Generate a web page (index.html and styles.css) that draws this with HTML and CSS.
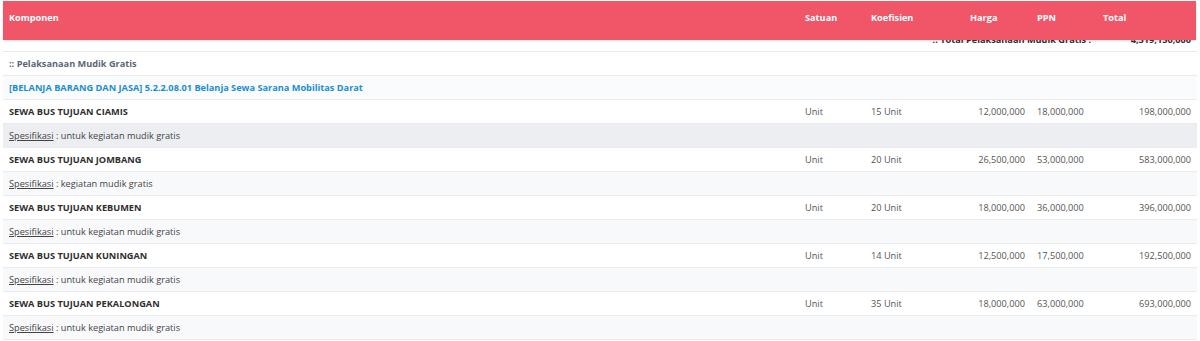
FILE: index.html
```html
<!DOCTYPE html>
<html lang="id">
<head>
<meta charset="utf-8">
<title>Komponen</title>
<link rel="stylesheet" href="styles.css">
</head>
<body>
<div class="frame">
  <div class="head">
    <div class="hc">Komponen</div>
    <div class="hc">Satuan</div>
    <div class="hc">Koefisien</div>
    <div class="hc">Harga</div>
    <div class="hc">PPN</div>
    <div class="hc">Total</div>
  </div>
  <table class="grid">
    <colgroup>
      <col class="c-komp"><col class="c-sat"><col class="c-koef"><col class="c-harga"><col class="c-ppn"><col class="c-total">
    </colgroup>
    <tbody>
      <tr class="total-row">
        <td colspan="5" class="r">:: Total Pelaksanaan Mudik Gratis :</td>
        <td class="r">4,319,150,000</td>
      </tr>
      <tr class="group">
        <td colspan="6">:: Pelaksanaan Mudik Gratis</td>
      </tr>
      <tr class="akun">
        <td colspan="6">[BELANJA BARANG DAN JASA] 5.2.2.08.01 Belanja Sewa Sarana Mobilitas Darat</td>
      </tr>
      <tr class="item">
        <td class="name">SEWA BUS TUJUAN CIAMIS</td>
        <td>Unit</td><td>15 Unit</td><td class="r">12,000,000</td><td>18,000,000</td><td class="r">198,000,000</td>
      </tr>
      <tr class="spec hover"><td colspan="6"><u>Spesifikasi</u> : untuk kegiatan mudik gratis</td></tr>
      <tr class="item">
        <td class="name">SEWA BUS TUJUAN JOMBANG</td>
        <td>Unit</td><td>20 Unit</td><td class="r">26,500,000</td><td>53,000,000</td><td class="r">583,000,000</td>
      </tr>
      <tr class="spec"><td colspan="6"><u>Spesifikasi</u> : kegiatan mudik gratis</td></tr>
      <tr class="item">
        <td class="name">SEWA BUS TUJUAN KEBUMEN</td>
        <td>Unit</td><td>20 Unit</td><td class="r">18,000,000</td><td>36,000,000</td><td class="r">396,000,000</td>
      </tr>
      <tr class="spec"><td colspan="6"><u>Spesifikasi</u> : untuk kegiatan mudik gratis</td></tr>
      <tr class="item">
        <td class="name">SEWA BUS TUJUAN KUNINGAN</td>
        <td>Unit</td><td>14 Unit</td><td class="r">12,500,000</td><td>17,500,000</td><td class="r">192,500,000</td>
      </tr>
      <tr class="spec"><td colspan="6"><u>Spesifikasi</u> : untuk kegiatan mudik gratis</td></tr>
      <tr class="item">
        <td class="name">SEWA BUS TUJUAN PEKALONGAN</td>
        <td>Unit</td><td>35 Unit</td><td class="r">18,000,000</td><td>63,000,000</td><td class="r">693,000,000</td>
      </tr>
      <tr class="spec"><td colspan="6"><u>Spesifikasi</u> : untuk kegiatan mudik gratis</td></tr>
    </tbody>
  </table>
</div>
</body>
</html>
```
FILE: styles.css
```css
html, body {
  margin: 0;
  padding: 0;
  background: #ffffff;
}
body {
  font-family: "Open Sans", "Noto Sans", sans-serif;
  font-size: 9.2px;
  color: #4a4a4a;
}
.frame {
  position: relative;
  padding: 28px 3px 0 3px;
}
.head {
  position: absolute;
  top: 1px;
  left: 3px;
  right: 4px;
  height: 39px;
  background: #f05668;
  box-shadow: 0 1px 2px rgba(0,0,0,0.12);
  display: grid;
  grid-template-columns: 796px 66px 99px 67px 66px 1fr;
  align-items: start;
  z-index: 2;
}
.hc {
  padding: 10px 6px 0 6px;
  color: #ffffff;
  font-weight: 700;
}
.grid {
  width: 1194px;
  border-collapse: collapse;
  table-layout: fixed;
}
.c-komp { width: 796px; }
.c-sat { width: 66px; }
.c-koef { width: 99px; }
.c-harga { width: 67px; }
.c-ppn { width: 66px; }
.c-total { width: 100px; }
.grid td {
  height: 23px;
  padding: 0 6px;
  border-bottom: 1px solid #e9ebef;
  white-space: nowrap;
  vertical-align: middle;
  line-height: 12px;
}
.grid td.r { text-align: right; }
.total-row td {
  font-weight: 700;
  color: #333333;
}
.group td {
  font-weight: 700;
  color: #5b6677;
}
.akun td {
  font-weight: 700;
  color: #1b8fd2;
  background: #fafbfc;
}
.item td { color: #555555; }
.item td.name {
  font-weight: 700;
  color: #2f2f2f;
}
.spec td {
  background: #f8f9fb;
  color: #444444;
}
.spec.hover td { background: #eceef2; }
.spec u { text-decoration: underline; }
```
